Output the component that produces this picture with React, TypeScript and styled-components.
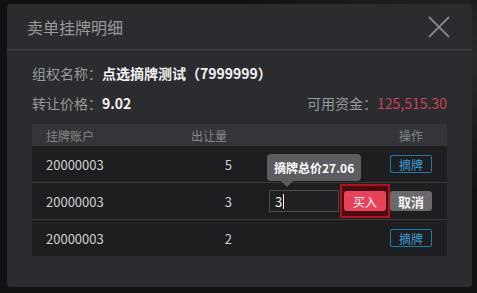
import styled, { createGlobalStyle } from "styled-components";

const GlobalStyle = createGlobalStyle`
  html, body {
    margin: 0;
    padding: 0;
    background: #0f0f11;
    font-family: "Noto Sans CJK SC", "Noto Sans", sans-serif;
  }
`;

type Row = {
  account: string;
  qty: number;
  editing?: boolean;
};

const rows: Row[] = [
  { account: "20000003", qty: 5 },
  { account: "20000003", qty: 3, editing: true },
  { account: "20000003", qty: 2 },
];

const CloseIcon = () => (
  <svg width="22" height="22" viewBox="0 0 22 22">
    <path d="M1 1 L21 21 M21 1 L1 21" stroke="#85868a" strokeWidth="1.8" />
  </svg>
);

const App = () => {
  return (
    <Page>
      <GlobalStyle />
      <Modal>
        <Header>
          <Title>卖单挂牌明细</Title>
          <CloseButton>
            <CloseIcon />
          </CloseButton>
        </Header>
        <Body>
          <InfoLine>
            <span>
              <Label>组权名称：</Label>
              <Value>点选摘牌测试（7999999）</Value>
            </span>
          </InfoLine>
          <InfoLine>
            <span>
              <Label>转让价格：</Label>
              <Value>9.02</Value>
            </span>
            <span>
              <Label>可用资金：</Label>
              <Money>125,515.30</Money>
            </span>
          </InfoLine>
          <Table>
            <HeadRow>
              <HeadCell>挂牌账户</HeadCell>
              <HeadCell $align="right">出让量</HeadCell>
              <HeadCell $align="right">
                <OpLabel>操作</OpLabel>
              </HeadCell>
            </HeadRow>
            {rows.map((r, i) => (
              <BodyRow key={i}>
                <Cell>{r.account}</Cell>
                <Cell $align="right">{r.qty}</Cell>
                <ActionCell>
                  {r.editing ? (
                    <>
                      <InputWrap>
                        <Tooltip>摘牌总价27.06</Tooltip>
                        <QtyInput>
                          3<Caret />
                        </QtyInput>
                      </InputWrap>
                      <BuyFocus>
                        <BuyButton>买入</BuyButton>
                      </BuyFocus>
                      <CancelButton>取消</CancelButton>
                    </>
                  ) : (
                    <PickButton>摘牌</PickButton>
                  )}
                </ActionCell>
              </BodyRow>
            ))}
          </Table>
        </Body>
      </Modal>
    </Page>
  );
};

export default App;

const Page = styled.div`
  width: 477px;
  height: 293px;
  box-sizing: border-box;
  padding: 4px 5px 6px 7px;
  background: radial-gradient(ellipse at 100% 20%, #2a2a2d 0%, #111113 40%) #0f0f11;
`;

const Modal = styled.div`
  width: 465px;
  height: 283px;
  background: #2b2c30;
  border-radius: 3px;
  display: flex;
  flex-direction: column;
`;

const Header = styled.div`
  height: 45px;
  border-bottom: 1px solid #44454a;
  display: flex;
  align-items: center;
  justify-content: space-between;
  padding: 0 22px 0 20px;
`;

const Title = styled.div`
  font-size: 16px;
  color: #9a9a9c;
`;

const CloseButton = styled.div`
  display: flex;
  width: 22px;
  height: 22px;
`;

const Body = styled.div`
  padding: 8px 25px 0;
`;

const InfoLine = styled.div`
  height: 30px;
  display: flex;
  align-items: center;
  justify-content: space-between;
  font-size: 14px;
`;

const Label = styled.span`
  color: #9a9a9c;
`;

const Value = styled.span`
  color: #f2f2f2;
  font-weight: bold;
`;

const Money = styled.span`
  color: #c94452;
`;

const Table = styled.div`
  margin-top: 6px;
  display: flex;
  flex-direction: column;
`;

const HeadRow = styled.div`
  display: grid;
  grid-template-columns: 150px 45px 1fr;
  height: 22px;
  align-items: center;
  background: #343539;
`;

const HeadCell = styled.div<{ $align?: "left" | "right" }>`
  font-size: 12px;
  color: #86878a;
  text-align: ${(p) => p.$align ?? "left"};
  padding-left: ${(p) => (p.$align === "right" ? "0" : "14px")};
`;

const OpLabel = styled.span`
  display: inline-block;
  width: 42px;
  text-align: center;
  margin-right: 15px;
`;

const BodyRow = styled.div`
  display: grid;
  grid-template-columns: 150px 50px 1fr;
  height: 36px;
  align-items: center;
  background: #1e1e20;
  & + & {
    border-top: 1px solid #38393c;
  }
`;

const Cell = styled.div<{ $align?: "left" | "right" }>`
  font-size: 13px;
  color: #d0d0d0;
  text-align: ${(p) => p.$align ?? "left"};
  padding-left: ${(p) => (p.$align === "right" ? "0" : "14px")};
`;

const ActionCell = styled.div`
  display: flex;
  justify-content: flex-end;
  align-items: center;
  padding-right: 15px;
`;

const PickButton = styled.div`
  width: 42px;
  height: 18px;
  box-sizing: border-box;
  border: 1px solid #1d7cad;
  border-radius: 2px;
  color: #3b9fd6;
  font-size: 12px;
  display: flex;
  align-items: center;
  justify-content: center;
`;

const InputWrap = styled.div`
  position: relative;
  margin-right: 1px;
`;

const QtyInput = styled.div`
  width: 70px;
  height: 22px;
  box-sizing: border-box;
  border: 1px solid #4a4b4e;
  background: #202023;
  color: #f0f0f0;
  font-size: 13px;
  display: flex;
  align-items: center;
  padding-left: 5px;
`;

const Caret = styled.span`
  display: inline-block;
  width: 1px;
  height: 15px;
  background: #f0f0f0;
  margin-left: 1px;
`;

const Tooltip = styled.div`
  position: absolute;
  left: -2px;
  bottom: calc(100% + 9px);
  height: 27px;
  padding: 0 7px;
  display: flex;
  align-items: center;
  white-space: nowrap;
  background: #5c5d60;
  border-radius: 4px;
  color: #ffffff;
  font-size: 12px;
  font-weight: bold;
  &::after {
    content: "";
    position: absolute;
    left: 14px;
    top: 100%;
    border-left: 6px solid transparent;
    border-right: 6px solid transparent;
    border-top: 6px solid #5c5d60;
  }
`;

const BuyFocus = styled.div`
  width: 50px;
  height: 34px;
  box-sizing: border-box;
  border: 2px solid #b0121f;
  background: #4a0b12;
  padding: 5px 2px;
  display: flex;
`;

const BuyButton = styled.div`
  flex: 1;
  border-radius: 3px;
  background: #e8415a;
  color: #ffffff;
  font-size: 12px;
  display: flex;
  align-items: center;
  justify-content: center;
`;

const CancelButton = styled.div`
  width: 42px;
  height: 20px;
  border-radius: 3px;
  background: #6a6a6c;
  color: #f2f2f2;
  font-size: 13px;
  font-weight: bold;
  display: flex;
  align-items: center;
  justify-content: center;
`;
